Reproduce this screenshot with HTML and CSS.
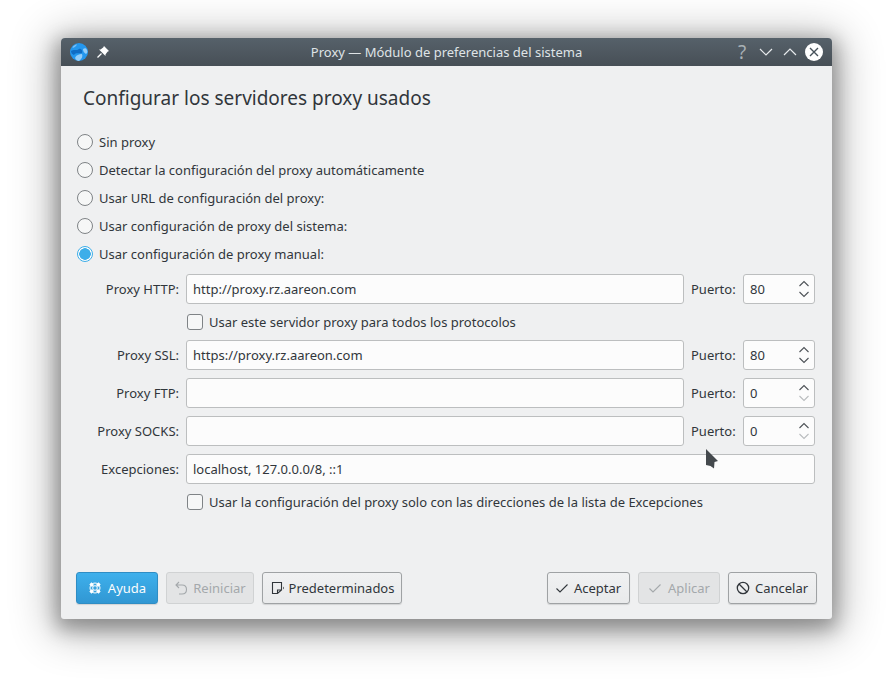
FILE: index.html
```html
<!DOCTYPE html>
<html>
<head>
  <title>Proxy</title>
  <link rel="stylesheet" href="styles.css">
</head>
<body>
  <div class="window">
    <div class="titlebar">
      <div class="title-left">
        <svg class="globe" width="18" height="18" viewBox="0 0 18 18">
          <circle cx="9" cy="9" r="9" fill="#2497ee"/>
          <path d="M1 8 C3 6 7 8 9 6 C11 5 13 8 12 10 C9 11 6 9 4 12 C2 11 1 10 1 8 Z" fill="#0f6cc4"/>
          <path d="M5 15 C6 12 9 11 12 11 C13 13 12 16 9 18 C7 18 6 17 5 15 Z" fill="#93cdfa"/>
          <path d="M13 6 C15 5 16 5 17 7 C18 9 17 10 16 11 C14 10 13 8 13 6 Z" fill="#93cdfa"/>
          <path d="M3 3.5 C4.5 2 6 1.5 7 1.5 C6 3.5 4.5 4.5 2.5 5 Z" fill="#7cc0f6"/>
        </svg>
        <svg class="pin" width="14" height="14" viewBox="0 0 14 14">
          <path d="M8 1 L13 6 L11.5 6.8 L9.5 9.5 L9.5 11 L3 4.5 L4.5 4.5 L7.2 2.5 Z" fill="#fff"/>
          <path d="M5.5 8.5 L1.5 12.5" stroke="#fff" stroke-width="1.2"/>
        </svg>
      </div>
      <div class="title-text">Proxy — Módulo de preferencias del sistema</div>
      <div class="title-buttons">
        <span class="help">?</span>
        <svg width="14" height="14" viewBox="0 0 14 14"><path d="M1 4 L7 10 L13 4" class="tb-line"/></svg>
        <svg width="14" height="14" viewBox="0 0 14 14"><path d="M1 10 L7 4 L13 10" class="tb-line"/></svg>
        <svg class="close" width="18" height="18" viewBox="0 0 18 18">
          <circle cx="9" cy="9" r="9" fill="#fff"/>
          <path d="M5 5 L13 13 M13 5 L5 13" stroke="#47525a" stroke-width="1.4"/>
        </svg>
      </div>
    </div>

    <div class="content">
      <h1>Configurar los servidores proxy usados</h1>

      <div class="radios">
        <div class="radio-row"><span class="radio"></span>Sin proxy</div>
        <div class="radio-row"><span class="radio"></span>Detectar la configuración del proxy automáticamente</div>
        <div class="radio-row"><span class="radio"></span>Usar URL de configuración del proxy:</div>
        <div class="radio-row"><span class="radio"></span>Usar configuración de proxy del sistema:</div>
        <div class="radio-row"><span class="radio checked"></span>Usar configuración de proxy manual:</div>
      </div>

      <div class="form">
        <div class="lbl">Proxy HTTP:</div>
        <div class="field">http://proxy.rz.aareon.com</div>
        <div class="port-lbl">Puerto:</div>
        <div class="field spin">80
          <svg class="arrows" width="12" height="18" viewBox="0 0 12 18"><path d="M1.5 6 L6 1.5 L10.5 6 M1.5 12 L6 16.5 L10.5 12" class="arrow"/></svg>
        </div>

        <div class="check-row"><span class="check"></span>Usar este servidor proxy para todos los protocolos</div>

        <div class="lbl">Proxy SSL:</div>
        <div class="field">https://proxy.rz.aareon.com</div>
        <div class="port-lbl">Puerto:</div>
        <div class="field spin">80
          <svg class="arrows" width="12" height="18" viewBox="0 0 12 18"><path d="M1.5 6 L6 1.5 L10.5 6 M1.5 12 L6 16.5 L10.5 12" class="arrow"/></svg>
        </div>

        <div class="lbl">Proxy FTP:</div>
        <div class="field"></div>
        <div class="port-lbl">Puerto:</div>
        <div class="field spin">0
          <svg class="arrows" width="12" height="18" viewBox="0 0 12 18"><path d="M1.5 6 L6 1.5 L10.5 6" class="arrow"/><path d="M1.5 12 L6 16.5 L10.5 12" class="arrow off"/></svg>
        </div>

        <div class="lbl">Proxy SOCKS:</div>
        <div class="field"></div>
        <div class="port-lbl">Puerto:</div>
        <div class="field spin">0
          <svg class="arrows" width="12" height="18" viewBox="0 0 12 18"><path d="M1.5 6 L6 1.5 L10.5 6" class="arrow"/><path d="M1.5 12 L6 16.5 L10.5 12" class="arrow off"/></svg>
        </div>

        <div class="lbl">Excepciones:</div>
        <div class="field wide">localhost, 127.0.0.0/8, ::1</div>

        <div class="check-row"><span class="check"></span>Usar la configuración del proxy solo con las direcciones de la lista de Excepciones</div>
      </div>

      <div class="buttons">
        <div class="btn-group">
          <div class="btn primary btn-help">
            <svg width="16" height="16" viewBox="0 0 16 16">
              <circle cx="8" cy="8" r="5" fill="none" stroke="#fff" stroke-width="1"/>
              <circle cx="8" cy="8" r="2.3" fill="none" stroke="#fff" stroke-width="1"/>
              <path d="M3.4 3.4 L6 6 M12.6 3.4 L10 6 M3.4 12.6 L6 10 M12.6 12.6 L10 10" stroke="#fff" stroke-width="3"/>
            </svg>
            Ayuda
          </div>
          <div class="btn disabled btn-reset">
            <svg width="16" height="16" viewBox="0 0 16 16"><path d="M6 2 L3 5 L6 8 M3 5 L9 5 C15 5 15 14 9 14 L6 14" fill="none" stroke="#a4a8ab" stroke-width="1.1"/></svg>
            Reiniciar
          </div>
          <div class="btn btn-defaults">
            <svg width="16" height="16" viewBox="0 0 16 16"><path d="M2.5 2.5 H11.5 V10 L7.5 13.5 H2.5 Z M7.5 13.5 V10 H11.5" fill="none" stroke="#31363b" stroke-width="1.1"/><path d="M14 6.5 V9.5 L13 8 Z" fill="#31363b"/></svg>
            Predeterminados
          </div>
        </div>
        <div class="btn-group">
          <div class="btn btn-ok">
            <svg width="16" height="16" viewBox="0 0 16 16"><path d="M2.5 8.5 L6 12 L13.5 4.5" fill="none" stroke="#31363b" stroke-width="1.1"/></svg>
            Aceptar
          </div>
          <div class="btn disabled btn-apply">
            <svg width="16" height="16" viewBox="0 0 16 16"><path d="M2.5 8.5 L6 12 L13.5 4.5" fill="none" stroke="#a4a8ab" stroke-width="1.1"/></svg>
            Aplicar
          </div>
          <div class="btn btn-cancel">
            <svg width="16" height="16" viewBox="0 0 16 16"><circle cx="8" cy="8" r="5.7" fill="none" stroke="#31363b" stroke-width="1.3"/><path d="M4 4 L12 12" stroke="#31363b" stroke-width="1.3"/></svg>
            Cancelar
          </div>
        </div>
      </div>
    </div>

    <svg class="cursor" width="13" height="20" viewBox="0 0 13 20">
      <path d="M0 0 L12 12 L8.5 13 L8 19.5 L4.5 17 L0 16 Z" fill="#44494d"/>
    </svg>
  </div>
</body>
</html>
```

FILE: styles.css
```css
html, body {
  margin: 0;
  height: 100%;
  background: #fff;
  overflow: hidden;
}
body {
  padding: 38px 0 0 61px;
  box-sizing: border-box;
  font-family: "Noto Sans", sans-serif;
  font-size: 13px;
  color: #31363b;
}
.window {
  position: relative;
  width: 771px;
  height: 581px;
  background: #eff0f1;
  border-radius: 4px 4px 3px 3px;
  box-shadow: 0 6px 18px 5px rgba(0,0,0,0.28), 0 6px 44px 8px rgba(0,0,0,0.3);
}

/* title bar */
.titlebar {
  height: 28px;
  display: flex;
  align-items: center;
  justify-content: space-between;
  padding: 0 9px;
  background: linear-gradient(180deg, #56616a 0%, #474f56 100%);
  border-radius: 4px 4px 0 0;
  color: #dfe3e6;
}
.title-left {
  display: flex;
  align-items: center;
  gap: 8px;
  width: 100px;
}
.globe {
  margin-top: -1px;
}
.title-text {
  flex: 1;
  text-align: center;
}
.title-buttons {
  width: 100px;
  display: flex;
  align-items: center;
  justify-content: flex-end;
  gap: 10px;
}
.help {
  width: 14px;
  text-align: center;
  font-size: 19px;
  line-height: 20px;
  color: #a9b0b5;
}
.close {
  margin-left: -2px;
}
.tb-line {
  fill: none;
  stroke: #e8ebed;
  stroke-width: 1.2;
}

/* content */
.content {
  padding: 0 15px;
}
h1 {
  margin: 0;
  padding: 19px 0 0 7px;
  font-size: 19px;
  font-weight: 400;
  line-height: 26px;
  height: 48px;
  box-sizing: border-box;
}
.radios {
  margin-top: 18px;
  display: flex;
  flex-direction: column;
  gap: 8px;
}
.radio-row {
  height: 20px;
  display: flex;
  align-items: center;
  gap: 6px;
  padding-left: 1px;
}
.radio {
  width: 16px;
  height: 16px;
  border: 1px solid #7f8386;
  border-radius: 50%;
  box-sizing: border-box;
  background: #f6f7f7;
}
.radio.checked {
  border: 1px solid #3daee9;
  background: radial-gradient(circle, #3daee9 0 5.5px, #fcfcfc 6px);
}

/* proxy form */
.form {
  margin: 10px 2px 0 0;
  display: grid;
  grid-template-columns: 103px 498px 45px 72px;
  column-gap: 7px;
  row-gap: 8px;
  align-items: center;
}
.lbl {
  text-align: right;
}
.field {
  height: 30px;
  box-sizing: border-box;
  border: 1px solid #bcbebf;
  border-radius: 3px;
  background: #fcfcfc;
  padding: 0 6px;
  line-height: 28px;
}
.field.wide {
  grid-column: 2 / 5;
}
.spin {
  position: relative;
}
.arrows {
  position: absolute;
  right: 4px;
  top: 5px;
}
.arrow {
  fill: none;
  stroke: #4d5257;
  stroke-width: 1.1;
}
.arrow.off {
  stroke: #b9bcbe;
}
.check-row {
  grid-column: 2 / 5;
  height: 20px;
  display: flex;
  align-items: center;
  gap: 6px;
  padding-left: 1px;
}
.check {
  width: 16px;
  height: 16px;
  box-sizing: border-box;
  border: 1px solid #7f8386;
  border-radius: 3px;
  background: #f6f7f7;
}

/* bottom buttons */
.buttons {
  margin-top: 60px;
  display: flex;
  justify-content: space-between;
}
.btn-group {
  display: flex;
  gap: 8px;
}
.btn {
  height: 32px;
  box-sizing: border-box;
  display: flex;
  align-items: center;
  justify-content: center;
  gap: 4px;
  border: 1px solid #9fa2a4;
  border-radius: 3px;
  background: linear-gradient(180deg, #f0f1f2 0%, #e9eaeb 100%);
  box-shadow: 0 1px 1px rgba(0,0,0,0.12);
}
.btn.primary {
  background: linear-gradient(180deg, #3eb0ec 0%, #3197d3 100%);
  border-color: #2f8dc4;
  color: #fcfcfc;
}
.btn.disabled {
  background: #e3e4e5;
  border-color: #d0d2d3;
  color: #a4a8ab;
  box-shadow: none;
}
.btn-help { width: 82px; gap: 5px; padding-right: 1px; }
.btn-reset { width: 88px; padding-right: 1px; }
.btn-defaults { width: 140px; gap: 3px; }
.btn-ok { width: 83px; padding-right: 2px; }
.btn-apply { width: 82px; gap: 5px; padding-right: 1px; }
.btn-cancel { width: 89px; padding-right: 2px; }

.cursor {
  position: absolute;
  left: 645px;
  top: 411px;
}
```
